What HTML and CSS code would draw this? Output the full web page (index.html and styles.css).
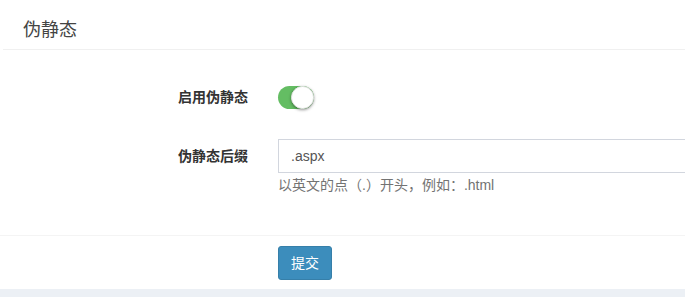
FILE: index.html
```html
<!DOCTYPE html>
<html lang="zh-CN">
<head>
<meta charset="utf-8">
<title>伪静态</title>
<link rel="stylesheet" href="styles.css">
</head>
<body>
<div class="box">
  <div class="box-header"><h3 class="box-title">伪静态</h3></div>
  <form class="box-body">
    <div class="form-row row-switch">
      <label class="form-label">启用伪静态</label>
      <div class="form-control-col">
        <span class="switch"><span class="knob"></span></span>
      </div>
    </div>
    <div class="form-row row-input">
      <label class="form-label">伪静态后缀</label>
      <div class="form-control-col">
        <input class="text-input" type="text" value=".aspx">
        <p class="help">以英文的点（.）开头，例如：.html</p>
      </div>
    </div>
  </form>
  <div class="box-footer">
    <div class="footer-spacer"></div>
    <div class="form-control-col">
      <button class="btn-primary" type="button">提交</button>
    </div>
  </div>
</div>
</body>
</html>
```
FILE: styles.css
```css
* { box-sizing: border-box; }
html, body { margin: 0; padding: 0; }
body {
  background: #ecf0f5;
  font-family: "Liberation Sans", Arial, "Noto Sans CJK SC", sans-serif;
  font-size: 14px;
  color: #333;
  overflow: hidden;
}
.box {
  background: #fff;
  width: 100%;
  box-shadow: 0 1px 1px rgba(0,0,0,0.12);
}
.box-header {
  margin-left: 3px;
  padding: 20px 0 9px 20px;
  border-bottom: 1px solid #f0f0f0;
}
.box-title {
  margin: 0;
  font-size: 18px;
  font-weight: normal;
  line-height: 20px;
  color: #444;
}
.box-body {
  margin: 0;
  padding: 30px 0 40px 0;
}
.form-row {
  display: flex;
  align-items: flex-start;
}
.row-switch { margin-bottom: 25px; }
.form-label {
  flex: 0 0 263px;
  padding-right: 15px;
  text-align: right;
  font-weight: bold;
  line-height: 34px;
  height: 34px;
  color: #333;
}
.form-control-col {
  flex: 1;
  min-width: 0;
  padding-left: 15px;
  overflow: hidden;
}
.row-switch .form-control-col {
  height: 34px;
  display: flex;
  align-items: center;
}
.switch {
  position: relative;
  display: inline-block;
  width: 36px;
  height: 23px;
  border-radius: 12px;
  background: #64bd63;
}
.knob {
  position: absolute;
  right: 0;
  top: 0;
  width: 23px;
  height: 23px;
  border-radius: 50%;
  background: #fff;
  border: 1px solid #e6e6e6;
  box-shadow: 0 1px 3px rgba(0,0,0,0.4);
}
.text-input {
  display: block;
  width: calc(100% + 20px);
  height: 34px;
  padding: 6px 12px;
  border: 1px solid #d2d6de;
  border-radius: 0;
  font-family: inherit;
  font-size: 14px;
  color: #555;
  outline: none;
}
.help {
  margin: 2px 0 0 0;
  line-height: 20px;
  color: #737373;
}
.box-footer {
  display: flex;
  border-top: 1px solid #f4f4f4;
  padding: 10px 0 9px 0;
}
.footer-spacer { flex: 0 0 263px; }
.btn-primary {
  height: 34px;
  padding: 6px 12px;
  background: #3c8dbc;
  border: 1px solid #367fa9;
  border-radius: 3px;
  color: #fff;
  font-family: inherit;
  font-size: 14px;
  line-height: 20px;
}
```
